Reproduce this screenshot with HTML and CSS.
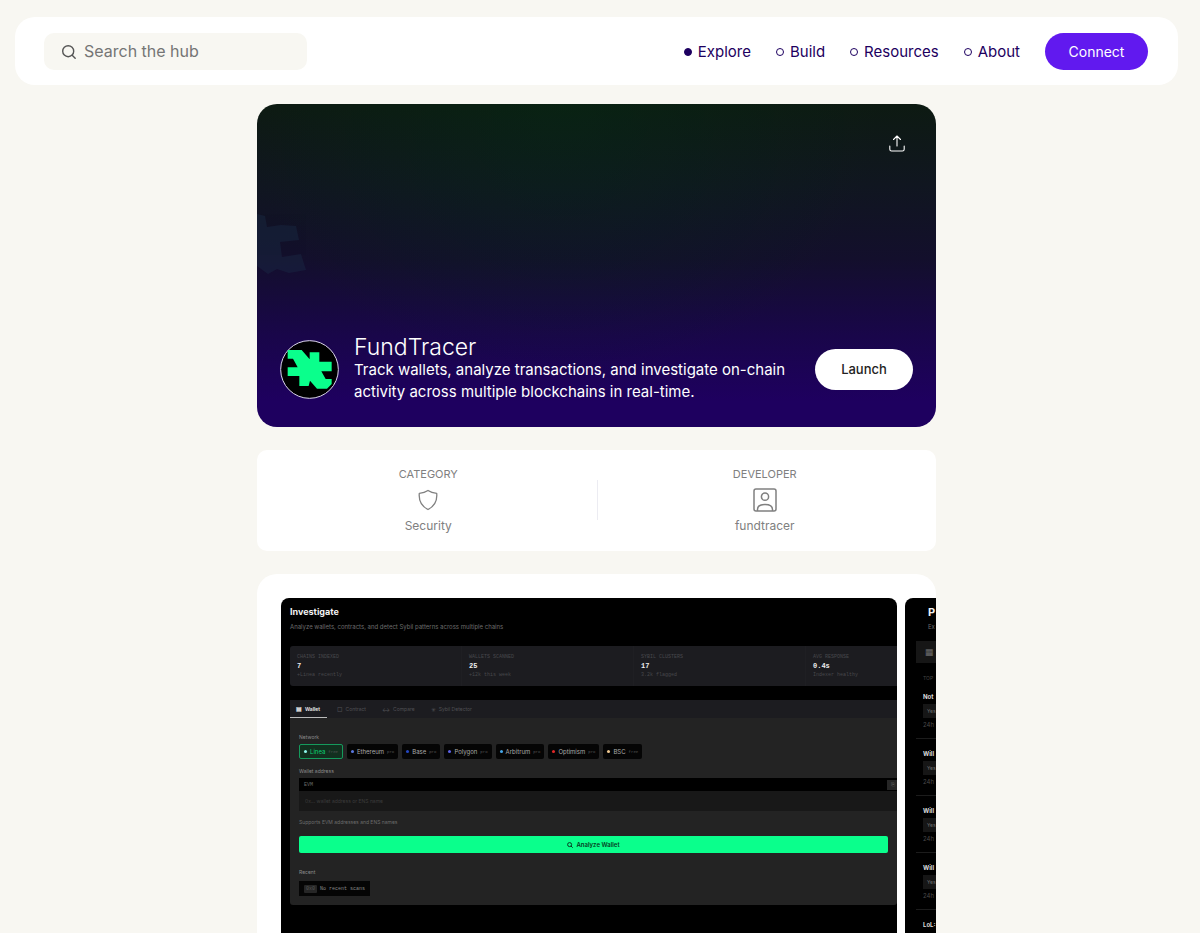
FILE: index.html
```html
<!DOCTYPE html>
<html lang="en">
  <head>
    <meta charset="UTF-8" />
    <meta name="viewport" content="width=device-width, initial-scale=1.0" />
    <title>FundTracer - Hub</title>
    <link rel="stylesheet" href="styles.css" />
  </head>
  <body>
    <div class="page">
      <header class="header">
        <label class="search">
          <svg width="16" height="16" viewBox="0 0 16 16" fill="none" stroke="#555" stroke-width="1.4" stroke-linecap="round">
            <circle cx="7.2" cy="7.2" r="5.5" />
            <path d="M11.2 11.2l3 3" />
          </svg>
          <input type="text" placeholder="Search the hub" aria-label="Search the hub" />
        </label>
        <nav class="nav">
          <a href="#" class="active">Explore</a>
          <a href="#">Build</a>
          <a href="#">Resources</a>
          <a href="#">About</a>
          <button type="button" class="connect-btn">Connect</button>
        </nav>
      </header>

      <main class="content">
        <section class="hero">
          <svg class="hero-mark" width="50" height="64" viewBox="0 0 50 64" fill="#1b2d48" aria-hidden="true">
            <path d="M0 2l8 2 2 11 14-2 15 1 3 14-19 2 2 15 19-3 5 16-17 3-12-4-9 5-11-8z" />
          </svg>
          <button type="button" class="share-btn" aria-label="Share">
            <svg width="16" height="17" viewBox="0 0 16 17" fill="none" stroke="#fff" stroke-width="1.1" stroke-linecap="round" stroke-linejoin="round">
              <path d="M8 11V1M4.5 4.5L8 1l3.5 3.5M.8 11v3.2c0 1.2.8 1.800 1.800 1.800h10.800c1 0 1.800-.6 1.800-1.800V11" />
            </svg>
          </button>
          <div class="app">
            <svg class="app-logo" width="59" height="59" viewBox="69 90 177 177">
              <circle cx="157.5" cy="178.5" r="86.5" fill="#000" stroke="#ddd6ee" stroke-width="3" />
              <path fill="#0aff8c" d="M92 120h42l24 28v-21h29v28h37v29h-31l13 23h18v15l-14 14h-30l-21-24-4 16h-28v-30H92v-26h30l-14-26H92z" />
            </svg>
            <div class="app-text">
              <h1>FundTracer</h1>
              <p>Track wallets, analyze transactions, and investigate on-chain activity across multiple blockchains in real-time.</p>
            </div>
            <button type="button" class="launch-btn">Launch</button>
          </div>
        </section>

        <section class="info">
          <div class="info-item">
            <span class="info-label">CATEGORY</span>
            <svg width="24" height="24" viewBox="0 0 24 24" fill="none" stroke="#808080" stroke-width="1.3" stroke-linejoin="round">
              <path d="M12 2.5c2.5 1.8 5.5 2.6 8.700 2.800.7 7.200-2.200 12.900-8.700 16.200-6.500-3.300-9.400-9-8.700-16.200C6.500 5.100 9.500 4.300 12 2.500z" />
            </svg>
            <span>Security</span>
          </div>
          <div class="info-item">
            <span class="info-label">DEVELOPER</span>
            <svg width="24" height="24" viewBox="0 0 24 24" fill="none" stroke="#808080" stroke-width="1.5">
              <rect x="1" y="1" width="22" height="22" rx="2" />
              <circle cx="12" cy="8.7" r="3.6" />
              <path d="M4.5 23v-1.500c0-3 3-5 7.500-5s7.500 2 7.500 5V23" />
            </svg>
            <span>fundtracer</span>
          </div>
        </section>

        <section class="gallery">
          <div class="shot">
            <h2>Investigate</h2>
            <p class="shot-sub">Analyze wallets, contracts, and detect Sybil patterns across multiple chains</p>
            <div class="stats">
              <div class="stat"><span>CHAINS INDEXED</span><b>7</b><span>+Linea recently</span></div>
              <div class="stat"><span>WALLETS SCANNED</span><b>25</b><span>+12k this week</span></div>
              <div class="stat"><span>SYBIL CLUSTERS</span><b>17</b><span>3.2k flagged</span></div>
              <div class="stat"><span>AVG RESPONSE</span><b>0.4s</b><span>Indexer healthy</span></div>
            </div>
            <div class="panel">
              <div class="tabs">
                <button type="button" class="tab selected"><i>▤</i>Wallet</button>
                <button type="button" class="tab"><i>▢</i>Contract</button>
                <button type="button" class="tab"><i>↔</i>Compare</button>
                <button type="button" class="tab"><i>✳</i>Sybil Detector</button>
              </div>
              <div class="panel-body">
                <span class="field-label">Network</span>
                <div class="chips">
                  <button type="button" class="chip linea"><i></i>Linea <small>free</small></button>
                  <button type="button" class="chip ethereum"><i></i>Ethereum <small>pro</small></button>
                  <button type="button" class="chip base"><i></i>Base <small>pro</small></button>
                  <button type="button" class="chip polygon"><i></i>Polygon <small>pro</small></button>
                  <button type="button" class="chip arbitrum"><i></i>Arbitrum <small>pro</small></button>
                  <button type="button" class="chip optimism"><i></i>Optimism <small>pro</small></button>
                  <button type="button" class="chip bsc"><i></i>BSC <small>free</small></button>
                </div>
                <label class="field-label" for="address">Wallet address</label>
                <div class="address">
                  <div class="address-bar"><span>EVM</span><span class="paste">⎘</span></div>
                  <input type="text" id="address" placeholder="0x... wallet address or ENS name" />
                </div>
                <p class="hint">Supports EVM addresses and ENS names</p>
                <button type="button" class="analyze-btn">
                  <svg width="6" height="6" viewBox="0 0 6 6" fill="none" stroke="#063a20" stroke-width="1">
                    <circle cx="2.6" cy="2.6" r="2" />
                    <path d="M4 4l1.700 1.700" />
                  </svg>
                  Analyze Wallet
                </button>
                <span class="field-label">Recent</span>
                <div class="recent"><small>0x0</small>No recent scans</div>
              </div>
            </div>
          </div>

          <div class="shot shot-markets">
            <h2>P</h2>
            <p class="shot-sub">Ex</p>
            <div class="market-tab">▦</div>
            <p class="market-head">TOP</p>
            <ul class="markets">
              <li><b>Not</b><span>Yes</span><small>24h</small></li>
              <li><b>Will</b><span>Yes</span><small>24h</small></li>
              <li><b>Will</b><span>Yes</span><small>24h</small></li>
              <li><b>Will</b><span>Yes</span><small>24h</small></li>
              <li><b>LoL:</b></li>
            </ul>
          </div>
        </section>
      </main>
    </div>
  </body>
</html>
```
FILE: styles.css
```css
*,
*::before {
  box-sizing: border-box;
}

body {
  margin: 0;
  background-color: #f8f7f2;
  color: #1d0060;
  font-family: Inter, "Liberation Sans", sans-serif;
}

h1,
h2,
p,
ul {
  margin: 0;
  padding: 0;
}

button,
input {
  font-family: inherit;
  border: none;
}

button {
  cursor: pointer;
}

svg {
  flex-shrink: 0;
}

.page {
  height: 100vh;
  overflow-y: auto;
  scrollbar-width: none;
  padding: 17px 22px 0 15px;
}

/* header */
.header {
  display: flex;
  justify-content: space-between;
  align-items: center;
  padding: 16px 30px 15px 29px;
  background-color: #fff;
  border-radius: 20px;
}

.search {
  display: flex;
  align-items: center;
  gap: 7px;
  width: 263px;
  height: 37px;
  padding: 0 17px;
  background-color: #f8f7f2;
  border-radius: 10px;
}

.search input {
  width: 100%;
  padding: 0 0 2px;
  background: none;
  outline: none;
  font-size: 16px;
}

.search input::placeholder {
  color: #757575;
}

.nav {
  display: flex;
  align-items: center;
  gap: 25px;
}

.nav a {
  display: flex;
  align-items: center;
  gap: 6px;
  color: #1d0060;
  font-size: 15px;
  text-decoration: none;
}

.nav a::before {
  content: "";
  width: 8px;
  height: 8px;
  border: 1px solid #1d0060;
  border-radius: 50%;
}

.nav a.active::before {
  background-color: #1d0060;
}

.connect-btn {
  width: 103px;
  height: 37px;
  border-radius: 19px;
  background-color: #6119ef;
  color: #fff;
  font-size: 14px;
}

.content {
  max-width: 679px;
  margin: 19px auto 0;
  display: flex;
  flex-direction: column;
  gap: 23px;
}

/* hero */
.hero {
  position: relative;
  display: flex;
  flex-direction: column;
  justify-content: space-between;
  min-height: 323px;
  padding: 24px 23px;
  border-radius: 20px;
  overflow: hidden;
  background:
    radial-gradient(ellipse at 45% 0, rgba(0, 50, 20, 0.35), transparent 60%),
    linear-gradient(#0d1a12, #101620 25%, #130f2c 48%, #19064a 72%, #1e005f 92%);
}

.hero-mark {
  position: absolute;
  left: 0;
  top: 108px;
  opacity: 0.4;
}

.share-btn {
  align-self: flex-end;
  display: flex;
  padding: 7px 8px;
  background: none;
}

.app {
  display: flex;
  align-items: center;
  gap: 15px;
}

.app-text {
  flex: 1;
  color: #fff;
}

.app-text h1 {
  font-size: 23px;
  font-weight: 300;
  line-height: 24px;
}

.app-text p {
  font-size: 15px;
  line-height: 22px;
}

.launch-btn {
  width: 98px;
  height: 41px;
  border-radius: 21px;
  background-color: #fff;
  color: #222;
  font-size: 13px;
  font-weight: 500;
}

/* category and developer */
.info {
  display: flex;
  padding: 16px 3px 17px;
  background-color: #fff;
  border-radius: 10px;
  color: #808080;
  font-size: 12px;
  line-height: 16px;
}

.info-item {
  flex: 1;
  display: flex;
  flex-direction: column;
  align-items: center;
  gap: 6px;
  position: relative;
}

.info-item + .info-item::before {
  content: "";
  position: absolute;
  left: 0;
  top: 14px;
  bottom: 14px;
  width: 1px;
  background-color: #ececf2;
}

.info-label {
  font-size: 11px;
}

/* gallery */
.gallery {
  display: flex;
  gap: 8px;
  padding: 24px 0 24px 24px;
  background-color: #fff;
  border-radius: 20px;
  overflow: hidden;
}

.shot {
  flex: 0 0 616px;
  height: 385px;
  padding: 8px 0 0 9px;
  background-color: #000;
  border-radius: 8px;
  overflow: hidden;
  color: #6c6c6c;
  font-size: 5px;
  line-height: 8px;
}

.shot h2 {
  color: #f2f2f2;
  font-size: 9px;
  line-height: 12px;
}

.shot-sub {
  margin-top: 5px;
  font-size: 6px;
}

.stats {
  display: flex;
  margin-top: 15px;
  height: 40px;
  background-color: #1c1c20;
  border-radius: 3px 0 0 3px;
  font-family: "Liberation Mono", monospace;
}

.stat {
  flex: 0 0 172px;
  display: flex;
  flex-direction: column;
  gap: 1px;
  padding: 7px;
  border-right: 1px solid #1f1f23;
  color: #48484c;
}

.stat:last-child {
  flex: 1;
  border: none;
}

.stat b {
  color: #eee;
  font-size: 7px;
}

.panel {
  margin-top: 14px;
  border-radius: 3px;
  background-color: #232323;
}

.tabs {
  display: flex;
  gap: 4px;
  height: 18px;
  background-color: #1c1c20;
}

.tab {
  display: flex;
  align-items: center;
  gap: 3px;
  padding: 0 6px;
  background: none;
  color: #505054;
  font-size: 5px;
}

.tab i {
  font-size: 6px;
  font-style: normal;
}

.tab.selected {
  padding-right: 7px;
  border-bottom: 1px solid #bbb;
  color: #eee;
  font-weight: 600;
}

.panel-body {
  padding: 15px 0 9px 9px;
}

.field-label {
  display: block;
  color: #8b8b8b;
}

.chips {
  display: flex;
  gap: 4px;
  margin: 3px 0 8px;
}

.chip {
  display: flex;
  align-items: center;
  gap: 3px;
  height: 15px;
  padding: 0 4px;
  border-radius: 2px;
  background-color: #050505;
  color: #aaa;
  font-size: 6px;
}

.chip i {
  width: 3px;
  height: 3px;
  border-radius: 50%;
  background-color: #5a78e0;
}

.chip small {
  color: #555;
  font-family: "Liberation Mono", monospace;
  font-size: 4px;
}

.chip.linea {
  border: 1px solid #159a5c;
  background-color: #12301f;
  color: #0ccf75;
}

.chip.linea i {
  background-color: #8df5ec;
}

.chip.base i {
  background-color: #2447c4;
}

.chip.polygon i {
  background-color: #5c61e6;
}

.chip.arbitrum i {
  background-color: #45a6e8;
}

.chip.optimism i {
  background-color: #e02828;
}

.chip.bsc i {
  background-color: #f0c890;
}

.address {
  margin: 3px 0 7px;
  background-color: #181818;
}

.address-bar {
  display: flex;
  justify-content: space-between;
  align-items: center;
  height: 13px;
  padding-left: 5px;
  background-color: #000;
  font-family: "Liberation Mono", monospace;
}

.paste {
  padding: 1px 2px 1px 4px;
  background-color: #262626;
}

.address input {
  display: block;
  width: 100%;
  height: 20px;
  padding: 0 6px;
  background: none;
  font-size: 5px;
}

.address input::placeholder {
  color: #3c3c3c;
}

.analyze-btn {
  display: flex;
  justify-content: center;
  align-items: center;
  gap: 3px;
  width: calc(100% - 9px);
  height: 17px;
  margin: 10px 0 15px;
  border-radius: 2px;
  background-color: #0aff8c;
  color: #063a20;
  font-size: 6px;
  font-weight: 600;
}

.recent {
  display: inline-flex;
  align-items: center;
  gap: 3px;
  height: 15px;
  margin-top: 5px;
  padding: 0 5px;
  background-color: #050505;
  color: #8b8b8b;
  font-family: "Liberation Mono", monospace;
}

.recent small {
  padding: 0 2px;
  border-radius: 1px;
  background-color: #262626;
  color: #555;
  font-size: 5px;
}

.shot-markets {
  padding-left: 11px;
}

.shot-markets h2 {
  padding-left: 12px;
  font-size: 11px;
}

.shot-markets .shot-sub {
  padding-left: 12px;
}

.market-tab {
  height: 22px;
  margin-top: 10px;
  padding: 0 9px;
  background-color: #161616;
  font-size: 9px;
  line-height: 22px;
}

.market-head {
  margin: 11px 7px 0;
  color: #444;
}

.markets {
  list-style: none;
}

.markets li {
  display: flex;
  flex-direction: column;
  align-items: flex-start;
  height: 57px;
  padding: 11px 7px 0;
  border-bottom: 1px solid #1c1c1c;
}

.markets b {
  color: #ddd;
  font-size: 6px;
}

.markets span {
  width: 40px;
  margin: 3px 0;
  padding: 3px 4px;
  background-color: #161616;
  font-size: 5px;
}

.markets small {
  color: #4a4a4a;
  font-size: 6px;
}
```
